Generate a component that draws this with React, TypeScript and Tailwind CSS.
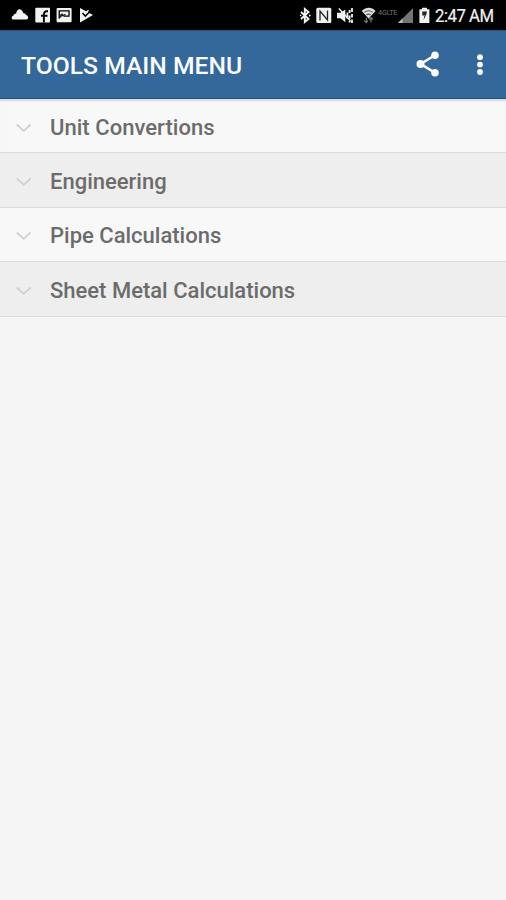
import React from "react";

const items = [
  { label: "Unit Convertions", row: "h-[54px] bg-[#f8f8f8] pt-[4px]", text: "tracking-[0.04px]" },
  { label: "Engineering", row: "h-[55px] bg-[#eeeeee] pt-[3px]", text: "tracking-[0px]" },
  { label: "Pipe Calculations", row: "h-[54px] bg-[#f8f8f8] pt-[3px]", text: "tracking-[0px]" },
  { label: "Sheet Metal Calculations", row: "h-[55px] bg-[#eeeeee] pt-[3px]", text: "tracking-[0px]" },
];

function StatusBar() {
  return (
    <div className="flex h-[30px] items-start justify-between bg-black pr-[12px] pl-[11px] pt-[7px] text-[#f2f2f2]">
      <div className="flex">
        <svg className="h-4 w-[18px]" viewBox="0 0 18 16" fill="currentColor">
          <path d="M2.5 12.5C.3 12.5-.1 9.4 2.4 8.7 2.8 6.8 4.4 6.5 5.1 6.8 5.7 1.2 10.6.7 12.4 6.2 14 6 14.7 7 14.9 8.1 17.9 8.5 17.7 12.5 15.5 12.5Z" />
        </svg>
        <svg className="ml-[6px] h-4 w-4" viewBox="0 0 16 16">
          <rect x=".3" y=".8" width="14.7" height="14.7" rx="1" fill="currentColor" />
          <path d="M8.9 15.5V7.3c0-2 1-3 2.8-3H13M6 8.8h6.5" fill="none" stroke="#000" strokeWidth="1.9" />
        </svg>
        <svg className="ml-[5px] h-4 w-4" viewBox="0 0 16 16">
          <rect x=".6" y="1" width="15" height="14.3" rx="1" fill="currentColor" />
          <path d="M3.2 11.5V3.8h9.8v5.4H7.6" fill="none" stroke="#000" strokeWidth="1.3" />
          <path d="M3.2 11.8V8.5L6 6.2l1.7 1.6L9 6.7l1 1.3-2.6 1.3H6Z" fill="#222" />
        </svg>
        <svg className="ml-[7px] h-4 w-[15px]" viewBox="0 0 15 16">
          <path d="M1 .9 14 8.1 1 15.5Z" fill="currentColor" />
          <path d="M3.5 6.1 6.3 9.1 12.2 3.2" fill="none" stroke="#000" strokeWidth="1.5" />
          <path d="M6.8 6 9.5 3.3" stroke="currentColor" strokeWidth="1.5" />
        </svg>
      </div>
      <div className="flex">
        <svg className="h-[17px] w-[13px]" viewBox="0 0 13 17" fill="none" stroke="currentColor" strokeWidth="1.9">
          <path d="M2 5l7.5 7-3.7 3V2l3.7 3L2 12" />
          <circle cx="1.6" cy="8.5" r=".8" fill="currentColor" stroke="none" />
          <circle cx="10.8" cy="8.5" r=".9" fill="currentColor" stroke="none" />
        </svg>
        <svg className="ml-[4px] h-[17px] w-4" viewBox="0 0 16 17">
          <rect x=".3" y=".8" width="15" height="15.2" rx="1.5" fill="currentColor" />
          <path d="M4 13.5V4l7.5 9V3.5" fill="none" stroke="#222" strokeWidth="1.3" />
        </svg>
        <svg className="ml-[5px] h-[17px] w-4" viewBox="0 0 16 17">
          <path d="M0 5.7h3.5L8.3 2.5v12.7l-4.8-3.9H0Z" fill="currentColor" />
          <path d="M10.4 5.5v6M12.6 3v3m0 2.5V12m0 2v1.5M15 1v4m0 2v3.5m0 2V16" stroke="currentColor" strokeWidth="1.8" />
          <path d="M1.8 1.6 13.5 14" stroke="currentColor" strokeWidth="1.4" />
        </svg>
        <svg className="ml-[8px] h-[17px] w-4" viewBox="0 0 16 17">
          <path d="M.7 4C5-.2 10.5-.2 14.5 4L7.6 11.5Z" fill="#dedede" />
          <path d="M3.5 5.3q4.1-3 8.2 0M5.5 7.8q2.1-1.3 4.2 0" fill="none" stroke="#555" strokeWidth="1.1" />
          <path d="M5.3 10.5v5.2m-2-2 2 2 1.6-2M10 15.5v-5m-2 2 2-2 1.8 2" fill="none" stroke="#777" strokeWidth="1.2" />
        </svg>
        <span className="mt-[2px] ml-[1px] w-[19px] origin-left scale-x-[0.9] whitespace-nowrap font-['Roboto',sans-serif] text-[8px] leading-[8px] tracking-[-0.1px] text-[#747474]">4G<span className="tracking-[-0.4px]">LTE</span></span>
        <svg className="ml-[1px] h-[17px] w-4" viewBox="0 0 16 17">
          <path d="M15 1v15H0Z" fill="#747474" />
          <path d="M4.5 11.5V16H0Z" fill="#bbb" />
        </svg>
        <svg className="ml-[5px] h-[17px] w-[11px]" viewBox="0 0 11 17">
          <path d="M3 .8h5v1.5h2.4V16H.4V2.3H3Z" fill="currentColor" />
          <path d="M3.3 4.5H8L7 8.5H3.3Zm3.5 4L4.6 13l.7-4Z" fill="#222" />
        </svg>
        <span className="ml-[5px] w-[59px] origin-left scale-x-[0.93] whitespace-nowrap font-['Roboto',sans-serif] text-[18px] leading-[18px] tracking-[-0.5px] [-webkit-text-stroke:0.2px_#f2f2f2]">2:47 AM</span>
      </div>
    </div>
  );
}

export default function App() {
  return (
    <div className="h-[900px] w-[506px] overflow-hidden bg-[#f5f5f5] font-['Roboto',sans-serif]">
      <StatusBar />
      <header className="flex h-[69px] items-center border-t border-b border-t-[#29516f] border-b-[#145891] bg-[#34679a] pl-[21px] text-[#fafcff]">
        <h1 className="flex-1 pt-[2px] text-[24.7px] leading-[28px] font-medium">TOOLS MAIN MENU</h1>
        <button aria-label="Share" className="mr-[36px] -mt-[2px]">
          <svg className="h-[28px] w-[26px]" viewBox="0 0 26 28" fill="currentColor">
            <path d="m21 5.2-14.5 8.7L21 22.7" fill="none" stroke="currentColor" strokeWidth="2.5" />
            <circle cx="21" cy="5.2" r="3.8" />
            <circle cx="6.5" cy="13.9" r="4" />
            <circle cx="21" cy="22.7" r="3.8" />
          </svg>
        </button>
        <button aria-label="More options" className="mr-[22px] -mt-[2px]">
          <svg className="h-[28px] w-[8px]" viewBox="0 0 8 28" fill="currentColor">
            <circle cx="4" cy="7.2" r="2.9" />
            <circle cx="4" cy="14.6" r="2.9" />
            <circle cx="4" cy="22" r="2.9" />
          </svg>
        </button>
      </header>
      <ul>
        {items.map((item, i) => (
          <li key={item.label} className={`flex items-center border-b border-[#dcdcdc] ${item.row} ${i === 0 ? "shadow-[inset_0_3px_2px_-1px_#ded9d5]" : ""}`}>
            <svg className="ml-[16px] h-[10px] w-[16px]" viewBox="0 0 16 10" fill="none" stroke="#d0d0d0" strokeWidth="1.8">
              <path d="m.8 1.5 6.9 6.3L14.6 1.5" />
            </svg>
            <span className={`ml-[18px] text-[22px] leading-[26px] font-medium text-[#6c6c6c] ${item.text}`}>{item.label}</span>
          </li>
        ))}
      </ul>
    </div>
  );
}
